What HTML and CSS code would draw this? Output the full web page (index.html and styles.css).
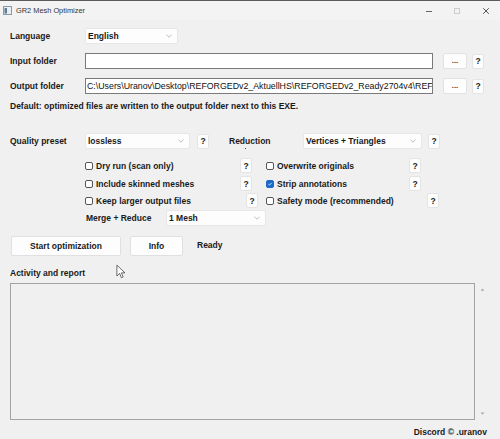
FILE: index.html
```html
<!DOCTYPE html>
<html lang="en">
<head>
  <meta charset="UTF-8">
  <meta name="viewport" content="width=device-width, initial-scale=1.0">
  <title>GR2 Mesh Optimizer</title>
  <link rel="stylesheet" href="styles.css">
</head>
<body>
  <div class="window">
    <!-- Title bar -->
    <div class="titlebar">
      <svg class="app-icon" viewBox="0 0 9 9">
        <rect x="0.5" y="0.5" width="8" height="8" fill="#e8eef2" stroke="#8a9aa6"/>
        <rect x="1.5" y="2" width="2.5" height="5.5" fill="#5d7d94"/>
      </svg>
      <span class="title">GR2 Mesh Optimizer</span>
      <div class="caption">
        <span class="cap">
          <svg viewBox="0 0 8 8"><line x1="1" y1="4.5" x2="7" y2="4.5" stroke="#555" stroke-width="0.9"/></svg>
        </span>
        <span class="cap">
          <svg viewBox="0 0 8 8"><rect x="1.5" y="1.5" width="5" height="5" fill="none" stroke="#c4c4c4" stroke-width="0.8"/></svg>
        </span>
        <span class="cap">
          <svg viewBox="0 0 8 8"><path d="M1.2 1.2 L6.8 6.8 M6.8 1.2 L1.2 6.8" stroke="#444" stroke-width="0.9"/></svg>
        </span>
      </div>
    </div>

    <div class="content">
      <div class="row row-lang">
        <span class="field-label">Language</span>
        <div class="combo combo-lang">
          <span>English</span>
          <svg class="chevron" viewBox="0 0 6 4"><polyline points="0.5,0.8 3,3.2 5.5,0.8" fill="none" stroke="#aaa" stroke-width="0.8"/></svg>
        </div>
      </div>

      <div class="row row-input">
        <span class="field-label">Input folder</span>
        <div class="path-box"></div>
        <button class="browse">...</button>
        <button class="help">?</button>
      </div>

      <div class="row row-output">
        <span class="field-label">Output folder</span>
        <div class="path-box">C:\Users\Uranov\Desktop\REFORGEDv2_AktuellHS\REFORGEDv2_Ready2704v4\REF</div>
        <button class="browse">...</button>
        <button class="help">?</button>
      </div>

      <p class="note">Default: optimized files are written to the output folder next to this EXE.</p>

      <div class="row row-quality">
        <span class="field-label">Quality preset</span>
        <div class="combo combo-quality">
          <span>lossless</span>
          <svg class="chevron" viewBox="0 0 6 4"><polyline points="0.5,0.8 3,3.2 5.5,0.8" fill="none" stroke="#aaa" stroke-width="0.8"/></svg>
        </div>
        <button class="help help-quality">?</button>
        <span class="reduction-label">Reduction</span>
        <div class="combo combo-reduction">
          <span>Vertices + Triangles</span>
          <svg class="chevron" viewBox="0 0 6 4"><polyline points="0.5,0.8 3,3.2 5.5,0.8" fill="none" stroke="#aaa" stroke-width="0.8"/></svg>
        </div>
        <button class="help help-reduction">?</button>
      </div>

      <div class="opts-row opts-1">
        <div class="opt col1">
          <label class="check-label"><span class="box"></span>Dry run (scan only)</label>
          <button class="help">?</button>
        </div>
        <div class="opt col2">
          <label class="check-label"><span class="box"></span>Overwrite originals</label>
          <button class="help">?</button>
        </div>
      </div>

      <div class="opts-row opts-2">
        <div class="opt col1">
          <label class="check-label"><span class="box"></span>Include skinned meshes</label>
          <button class="help">?</button>
        </div>
        <div class="opt col2">
          <label class="check-label"><span class="box checked">
            <svg viewBox="0 0 8 8"><polyline points="1.8,4.2 3.3,5.6 6.2,2.4" fill="none" stroke="#fff" stroke-width="1"/></svg>
          </span>Strip annotations</label>
          <button class="help">?</button>
        </div>
      </div>

      <div class="opts-row opts-3">
        <div class="opt col1 opt-long">
          <label class="check-label"><span class="box"></span>Keep larger output files</label>
          <button class="help">?</button>
        </div>
        <div class="opt col2 opt-long">
          <label class="check-label"><span class="box"></span>Safety mode (recommended)</label>
          <button class="help">?</button>
        </div>
      </div>

      <div class="row row-merge">
        <span class="merge-label">Merge + Reduce</span>
        <div class="combo combo-merge">
          <span>1 Mesh</span>
          <svg class="chevron" viewBox="0 0 6 4"><polyline points="0.5,0.8 3,3.2 5.5,0.8" fill="none" stroke="#aaa" stroke-width="0.8"/></svg>
        </div>
      </div>

      <div class="actions">
        <button class="action start">Start optimization</button>
        <button class="action info">Info</button>
        <span class="status">Ready</span>
      </div>

      <div class="section-label">Activity and report</div>

      <div class="log">
        <div class="log-box"></div>
        <div class="log-scroll">
          <svg viewBox="0 0 6 4"><polygon points="0.5,3.5 3,0.5 5.5,3.5" fill="#a8a8a8"/></svg>
          <svg viewBox="0 0 6 4"><polygon points="0.5,0.5 3,3.5 5.5,0.5" fill="#a8a8a8"/></svg>
        </div>
      </div>

      <div class="credit">Discord &copy; .uranov</div>
    </div>

    <!-- mouse pointer captured in the screenshot -->
    <svg class="pointer" viewBox="0 0 10 16">
      <path d="M1 1 L1 13 L4 10 L6 15 L8 14 L6 9.5 L10 9.5 Z" fill="#fff" stroke="#333" stroke-width="0.8" stroke-linejoin="round"/>
    </svg>
  </div>
</body>
</html>
```

FILE: styles.css
```css
body {
  margin: 0;
  background-color: #f0f0f0;
  font-family: "Liberation Sans", Arial, sans-serif;
  font-size: 8.5px;
  font-weight: bold;
  color: #1a1a1a;
}

.window {
  position: relative;
  width: 500px;
  height: 439px;
  overflow: hidden;
  border-top: 1px solid #5c5c5c;
  box-sizing: border-box;
}

/* Title bar */
.titlebar {
  height: 19px;
  display: flex;
  align-items: center;
  background-color: #f3f3f3;
}

.app-icon {
  width: 9px;
  height: 9px;
  margin-left: 3px;
}

.title {
  margin-left: 4px;
  font-size: 7.4px;
  font-weight: normal;
  color: #333;
}

.caption {
  margin-left: auto;
  display: flex;
}

.cap {
  width: 28.5px;
  height: 19px;
  display: flex;
  align-items: center;
  justify-content: center;
}

.cap svg {
  width: 8px;
  height: 8px;
}

/* Form */
.content {
  padding-left: 10px;
}

.row {
  display: flex;
  align-items: center;
  height: 16px;
}

.row > * {
  flex-shrink: 0;
}

.field-label {
  width: 75px;
}

.combo {
  height: 16px;
  box-sizing: border-box;
  display: flex;
  align-items: center;
  justify-content: space-between;
  padding: 0 5px 0 2px;
  background-color: #fdfdfd;
  border: 1px solid #e6e6e6;
  border-radius: 2px;
}

.chevron {
  width: 6px;
  height: 4px;
}

.combo-lang {
  width: 93px;
}

.path-box {
  width: 348px;
  height: 16px;
  box-sizing: border-box;
  padding: 0 1px;
  background-color: #fff;
  border: 1px solid #7a7a7a;
  font-weight: normal;
  font-size: 8.8px;
  line-height: 14px;
  color: #111;
  white-space: nowrap;
  overflow: hidden;
}

button {
  font-family: inherit;
  font-weight: bold;
  color: #1a1a1a;
  padding: 0;
  cursor: pointer;
}

.browse {
  width: 24px;
  height: 16px;
  margin-left: 10px;
  background-color: #fdfdfd;
  border: 1px solid #e2e2e2;
  border-radius: 2px;
  font-size: 7.5px;
  line-height: 14px;
  color: #333;
}

.help {
  width: 12px;
  height: 15px;
  margin-left: 5px;
  background-color: #fdfdfd;
  border: 1px solid #e4e4e4;
  border-radius: 2px;
  font-size: 8.5px;
  flex-shrink: 0;
}

.row-lang {
  margin-top: 8px;
}

.row-input {
  margin-top: 9px;
}

.row-output {
  margin-top: 9px;
}

.note {
  margin: 6px 0 0;
  height: 12px;
  line-height: 12px;
}

.row-quality {
  margin-top: 21px;
}

.combo-quality {
  width: 105px;
}

.help-quality {
  margin-left: 7px;
}

.reduction-label {
  position: relative;
  width: 74px;
  margin-left: 20px;
}

.reduction-label::after {
  content: "";
  position: absolute;
  left: 16px;
  top: 12px;
  width: 1px;
  height: 1px;
  background-color: #444;
}

.combo-reduction {
  width: 119px;
}

.help-reduction {
  margin-left: 6px;
}

/* Options */
.opts-row {
  display: flex;
  align-items: center;
  height: 17px;
  padding-left: 75px;
}

.opts-1 {
  margin-top: 8px;
}

.opts-2 {
  margin-top: 1px;
}

.opt {
  display: flex;
  align-items: center;
}

.opt .help {
  margin-left: 0;
}

.col1 {
  width: 181px;
}

.col1 .check-label {
  width: 155px;
}

.col2 .check-label {
  width: 143px;
}

.col1.opt-long .check-label,
.col2.opt-long .check-label {
  width: 161px;
}

.check-label {
  display: flex;
  align-items: center;
  cursor: pointer;
}

.box {
  width: 8px;
  height: 8px;
  box-sizing: border-box;
  margin-right: 3px;
  border: 1px solid #555;
  border-radius: 2px;
  background-color: #fff;
  display: flex;
}

.box.checked {
  background-color: #1b6ac9;
  border-color: #1b6ac9;
}

.box svg {
  width: 100%;
  height: 100%;
}

.row-merge {
  margin-top: 1px;
}

.merge-label {
  width: 80px;
  margin-left: 76px;
}

.combo-merge {
  width: 100px;
}

/* Actions */
.actions {
  display: flex;
  align-items: center;
  margin-top: 10px;
  padding-left: 1px;
  height: 20px;
}

.action {
  height: 20px;
  background-color: #fdfdfd;
  border: 1px solid #e0e0e0;
  border-radius: 2px;
  font-size: 8.5px;
}

.start {
  width: 110px;
}

.info {
  width: 53px;
  margin-left: 9px;
}

.status {
  margin-left: 14px;
  margin-top: -3px;
}

.section-label {
  margin-top: 11px;
  height: 12px;
  line-height: 12px;
}

/* Log */
.log {
  display: flex;
  margin-top: 4px;
  height: 137px;
}

.log-box {
  width: 465px;
  height: 137px;
  box-sizing: border-box;
  border: 1px solid #a3a3a3;
  background-color: #f0f0f0;
}

.log-scroll {
  width: 14px;
  display: flex;
  flex-direction: column;
  justify-content: space-between;
  align-items: center;
  padding: 5px 0 5px;
  box-sizing: border-box;
}

.log-scroll svg {
  width: 5px;
  height: 3px;
}

.credit {
  width: 477px;
  text-align: right;
  margin-top: 6px;
  height: 12px;
  line-height: 12px;
}

.pointer {
  position: absolute;
  left: 116px;
  top: 263px;
  width: 9px;
  height: 15px;
}
```
